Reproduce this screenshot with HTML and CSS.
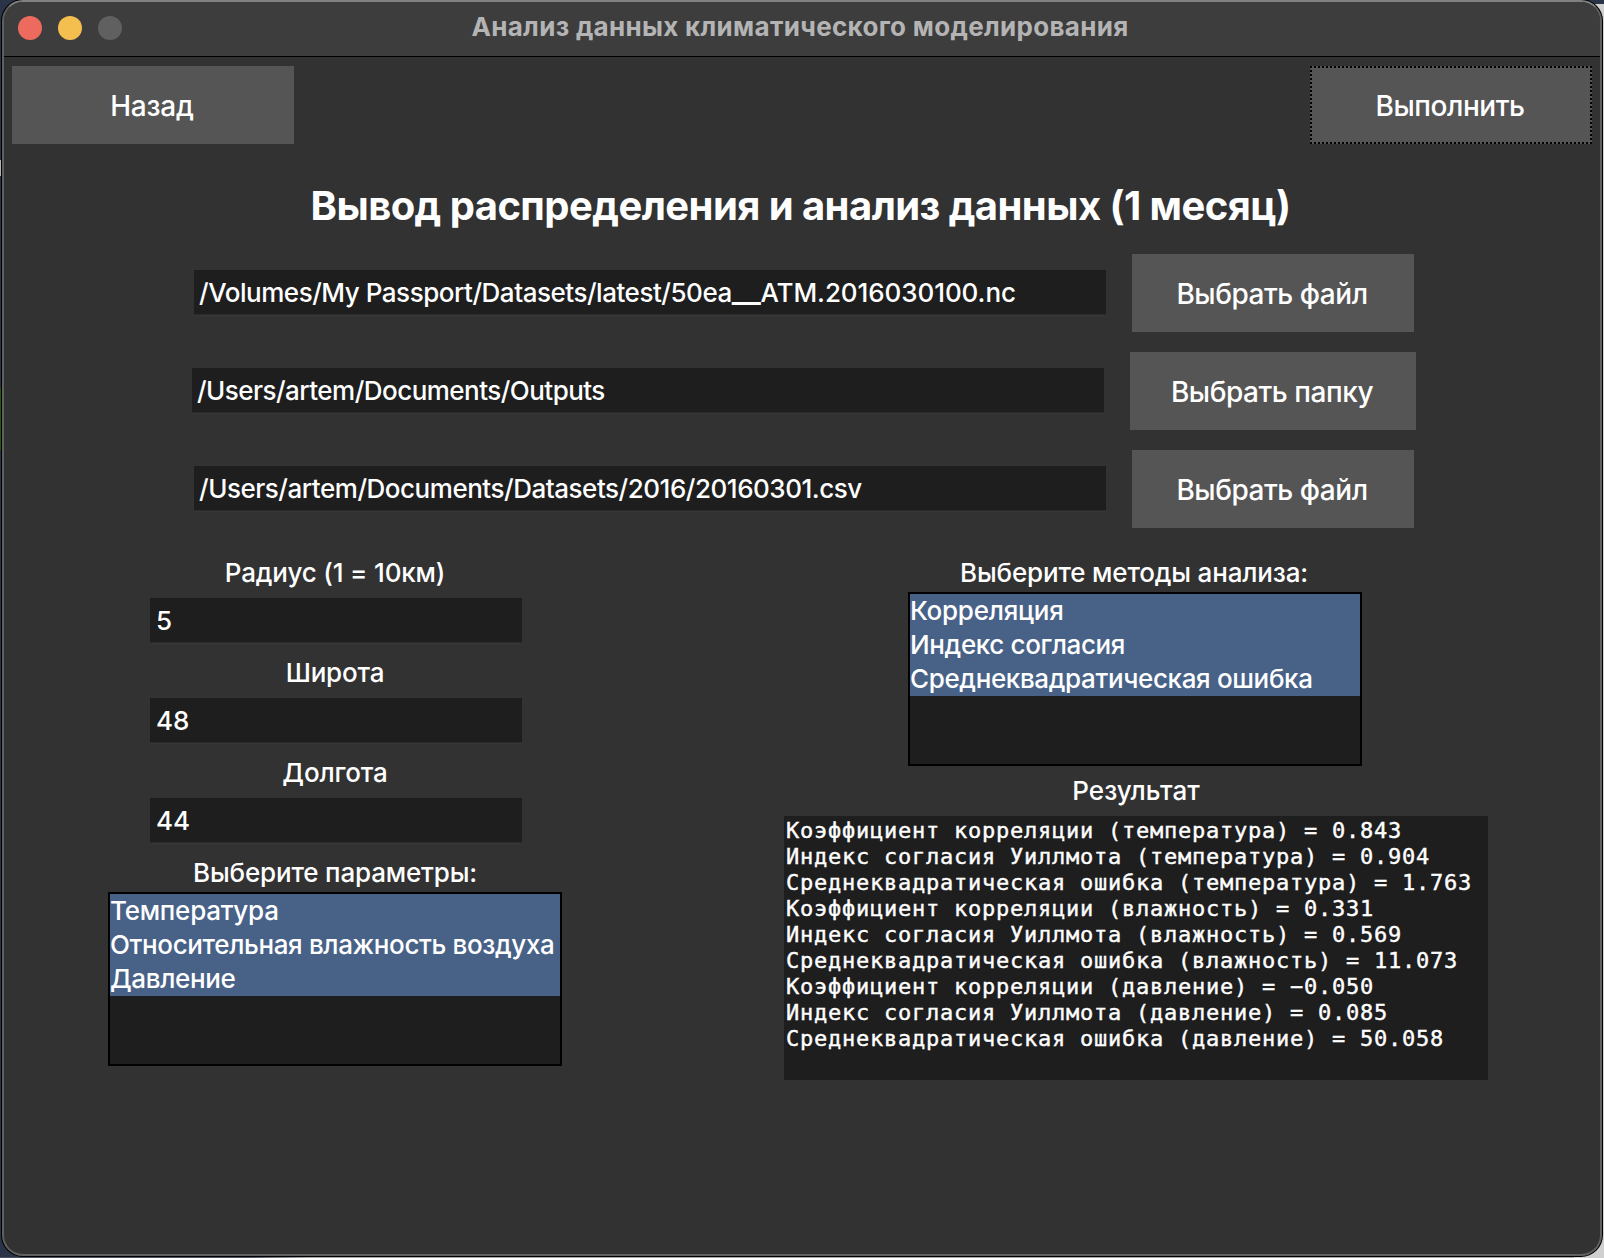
FILE: index.html
```html
<!DOCTYPE html>
<html lang="ru">
<head>
<meta charset="utf-8">
<title>Анализ данных климатического моделирования</title>
<link rel="stylesheet" href="styles.css">
</head>
<body>
<div class="window">
  <header class="titlebar">
    <div class="lights"><span class="light close"></span><span class="light minimize"></span><span class="light zoom"></span></div>
    <div class="window-title">Анализ данных климатического моделирования</div>
  </header>
  <main class="content">
    <nav class="toolbar">
      <button class="btn back">Назад</button>
      <button class="btn focused">Выполнить</button>
    </nav>
    <h1 class="heading">Вывод распределения и анализ данных (1 месяц)</h1>
    <section class="files">
      <div class="file-row"><div class="field path">/Volumes/My Passport/Datasets/latest/50ea<span class="underscores">__</span><span class="stamp">ATM.2016030100.nc</span></div><button class="btn">Выбрать файл</button></div>
      <div class="file-row"><div class="field path folder-path">/Users/artem/Documents/Outputs</div><button class="btn folder">Выбрать папку</button></div>
      <div class="file-row"><div class="field path">/Users/artem/Documents/Datasets/2016/20160301.csv</div><button class="btn">Выбрать файл</button></div>
    </section>
    <section class="columns">
      <div class="column params">
        <div class="label">Радиус (1 = 10км)</div>
        <div class="field number">5</div>
        <div class="label">Широта</div>
        <div class="field number">48</div>
        <div class="label">Долгота</div>
        <div class="field number">44</div>
        <div class="label list-label">Выберите параметры:</div>
        <ul class="list"><li>Температура</li><li>Относительная влажность воздуха</li><li>Давление</li></ul>
      </div>
      <div class="column analysis">
        <div class="label list-label">Выберите методы анализа:</div>
        <ul class="list"><li>Корреляция</li><li>Индекс согласия</li><li>Среднеквадратическая ошибка</li></ul>
        <div class="label result-label">Результат</div>
        <pre class="output">Коэффициент корреляции (температура) = 0.843
Индекс согласия Уиллмота (температура) = 0.904
Среднеквадратическая ошибка (температура) = 1.763
Коэффициент корреляции (влажность) = 0.331
Индекс согласия Уиллмота (влажность) = 0.569
Среднеквадратическая ошибка (влажность) = 11.073
Коэффициент корреляции (давление) = −0.050
Индекс согласия Уиллмота (давление) = 0.085
Среднеквадратическая ошибка (давление) = 50.058</pre>
      </div>
    </section>
  </main>
</div>
</body>
</html>
```
FILE: styles.css
```css
* { box-sizing: border-box; }

html, body { margin: 0; height: 100%; overflow: hidden; }

body {
  padding: 0 2px 2px;
  font-family: Inter, "Liberation Sans", sans-serif;
  font-size: 26px;
  font-weight: 450;
  color: #fff;
  background:
    linear-gradient(#2a3448, #2a3448) 0 0 / 100% 4px no-repeat,
    linear-gradient(#215e0b, #215e0b) 0 388px / 1px 62px no-repeat,
    linear-gradient(#b4b4b4, #b4b4b4) 0 160px / 1px 16px no-repeat,
    linear-gradient(#b4b4b4, #b4b4b4) 0 392px / 1px 12px no-repeat,
    linear-gradient(#d0d0d0, #d0d0d0) 100% 0 / 30px 100% no-repeat,
    linear-gradient(90deg, #4b5261 0 250px, #a9a9a9 310px) 0 100% / 100% 1px no-repeat,
    #2a3448;
}

.window {
  height: 1256px;
  display: flex;
  flex-direction: column;
  border: 2px solid #606060;
  border-top-color: #808080;
  border-radius: 21px;
  background: #323232;
  box-shadow: 0 0 0 1px #000;
  overflow: hidden;
}

.titlebar {
  flex: none;
  height: 55px;
  display: grid;
  grid-template-columns: 1fr auto 1fr;
  align-items: center;
  padding: 0 14px 2px;
  background: #3d3d3d;
  border-bottom: 1px solid #000;
}

.lights { display: flex; gap: 16px; }
.light { width: 24px; height: 24px; border-radius: 50%; }
.close { background: #ed6a5e; }
.minimize { background: #f5bf4f; }
.zoom { background: #606060; }

.window-title {
  padding: 0 4px 3px 0;
  font-weight: 700;
  line-height: 48px;
  letter-spacing: 0.31px;
  color: #b4b4b4;
}

.toolbar {
  display: flex;
  justify-content: space-between;
  padding: 9px 8px 0;
}

.btn {
  width: 282px;
  height: 78px;
  padding: 2px 2px 0 0;
  border: 0;
  background: #555;
  color: #fff;
  font: inherit;
  font-size: 28px;
  letter-spacing: -0.46px;
}
.back { letter-spacing: -0.22px; }
.folder { width: 286px; }
.focused { border: 2px dotted #000; }

.heading {
  margin: 38px 0 24px;
  padding-right: 3px;
  font-size: 40px;
  line-height: 48px;
  font-weight: 700;
  letter-spacing: -0.56px;
  text-align: center;
  white-space: nowrap;
}

.files {
  display: flex;
  flex-direction: column;
  gap: 20px;
  padding-left: 4px;
}
.file-row {
  display: flex;
  align-items: center;
  justify-content: center;
  gap: 26px;
}

.field {
  height: 44px;
  padding: 0 6px;
  line-height: 46px;
  white-space: nowrap;
  background: #1e1e1e;
  box-shadow: 0 1px 0 #2a2a2a, 0 2px 0 #373737;
}
.path {
  width: 912px;
  margin-bottom: 2px;
  padding-left: 5px;
  letter-spacing: -0.47px;
}
.folder-path { letter-spacing: -0.53px; }
.underscores { font-size: 32px; line-height: 1; }
.stamp { letter-spacing: -0.08px; }
.number { width: 372px; }

.columns { display: flex; gap: 4px; padding-top: 18px; }
.column { display: flex; flex-direction: column; align-items: center; }
.params { width: 664px; }
.analysis { flex: 1; }

.label {
  height: 56px;
  padding: 15px 2px 0 0;
  line-height: 32px;
  letter-spacing: -0.17px;
  white-space: nowrap;
}
.params .label:first-child { height: 52px; }
.list-label { height: 50px; }
.analysis .list-label { height: 46px; padding-right: 4px; }
.label:first-child { padding-top: 11px; }

.list {
  width: 454px;
  height: 174px;
  margin: 0 2px 0 0;
  padding: 0;
  list-style: none;
  border: 2px solid #000;
  background: #1e1e1e;
}
.list li {
  height: 34px;
  line-height: 34px;
  letter-spacing: -0.36px;
  white-space: nowrap;
  background: #486287;
}
.list li:first-child { letter-spacing: -0.25px; }

.analysis .result-label { height: 50px; padding: 9px 0 0; letter-spacing: 0; }

.output {
  width: 704px;
  height: 264px;
  margin: 0;
  padding: 2px;
  background: #1e1e1e;
  font-family: "DejaVu Sans Mono", monospace;
  font-size: 22px;
  font-weight: 400;
  line-height: 26px;
  letter-spacing: 0.755px;
  -webkit-text-stroke: 0.4px #fff;
}
```
